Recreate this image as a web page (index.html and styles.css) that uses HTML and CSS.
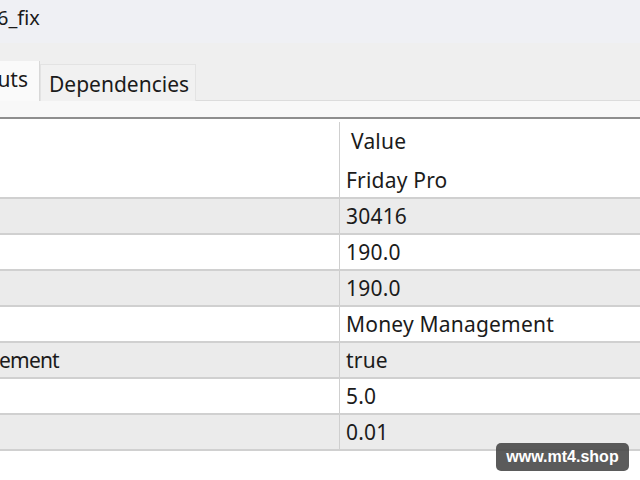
FILE: index.html
```html
<!DOCTYPE html>
<html>
<head>
<meta charset="utf-8">
<link rel="stylesheet" href="styles.css">
</head>
<body>
<div class="window">
  <div class="titlebar"><span class="title">6_fix</span></div>
  <div class="tabstrip">
    <div class="tab active"><span class="tab-label">uts</span></div>
    <div class="tab"><span class="tab-label">Dependencies</span></div>
  </div>
  <div class="strip"></div>
  <div class="grid">
    <div class="row header"><div class="cell name"></div><div class="cell value head">Value</div></div>
    <div class="row first"><div class="cell name"></div><div class="cell value">Friday Pro</div></div>
    <div class="row alt"><div class="cell name"></div><div class="cell value">30416</div></div>
    <div class="row"><div class="cell name"></div><div class="cell value">190.0</div></div>
    <div class="row alt"><div class="cell name"></div><div class="cell value">190.0</div></div>
    <div class="row"><div class="cell name"></div><div class="cell value">Money Management</div></div>
    <div class="row alt"><div class="cell name"><span class="name-text">ement</span></div><div class="cell value">true</div></div>
    <div class="row"><div class="cell name"></div><div class="cell value">5.0</div></div>
    <div class="row alt last"><div class="cell name"></div><div class="cell value">0.01</div></div>
  </div>
</div>
<div class="watermark">www.mt4.shop</div>
</body>
</html>
```

FILE: styles.css
```css
html, body {
  margin: 0;
  padding: 0;
  background: #ffffff;
}
body {
  width: 640px;
  height: 480px;
  overflow: hidden;
  position: relative;
  font-family: "Noto Sans", "Open Sans", sans-serif;
  color: #1b1b1b;
}
.window {
  display: flex;
  flex-direction: column;
}
.titlebar {
  height: 43px;
  background: #eff0f4;
  display: flex;
  align-items: center;
  overflow: hidden;
}
.title {
  font-size: 20px;
  margin-left: -3px;
  margin-top: -8px;
  color: #1a1a1a;
}
.tabstrip {
  height: 57px;
  background: #efefef;
  border-bottom: 1px solid #dcdcdc;
  display: flex;
  align-items: flex-end;
}
.tab {
  height: 36px;
  background: #f1f1f1;
  border: 1px solid #e3e3e3;
  border-bottom: none;
  display: flex;
  align-items: center;
  padding: 0 6px 0 8px;
  font-size: 21px;
  margin-bottom: -1px;
  position: relative;
}
.tab.active {
  height: 40px;
  width: 40px;
  box-sizing: border-box;
  background: #fafafa;
  border-left: none;
  border-right: 1px solid #d8d8d8;
  border-top: none;
  padding: 0 11px 6px 0;
  justify-content: flex-end;
}
.tab-label {
  line-height: 1;
  margin-top: 2px;
}
.strip {
  height: 16px;
  background: #f8f8f8;
  border-bottom: 2px solid #8e8e8e;
}
.grid {
  display: flex;
  flex-direction: column;
}
.row {
  display: grid;
  grid-template-columns: 340px 1fr;
  height: 34px;
  border-top: 2px solid #d0d0d0;
  font-size: 21px;
  letter-spacing: 0.2px;
}
.row.alt {
  background: #ebebeb;
}
.row.header {
  height: 41px;
  border-top: none;
}
.row.first {
  height: 37px;
  border-top: none;
}
.row.first .cell.value {
  padding-top: 3px;
}
.row.last {
  border-bottom: 2px solid #d0d0d0;
}
.cell {
  display: flex;
  align-items: center;
  white-space: nowrap;
  overflow: hidden;
}
.cell.name {
  border-right: 1px solid #cfcfcf;
}
.name-text {
  letter-spacing: -0.8px;
  margin-left: -1px;
}
.cell.value {
  padding-left: 6px;
}
.cell.value.head {
  padding-left: 11px;
  padding-top: 2px;
}
.header .cell.name {
  margin-top: 3px;
}
.watermark {
  position: absolute;
  left: 496px;
  top: 443px;
  width: 133px;
  height: 28px;
  border-radius: 5px;
  background: rgba(68, 68, 68, 0.88);
  color: #ffffff;
  font-family: "Liberation Sans", Arial, sans-serif;
  font-weight: bold;
  font-size: 16px;
  display: flex;
  align-items: center;
  justify-content: center;
}
```
